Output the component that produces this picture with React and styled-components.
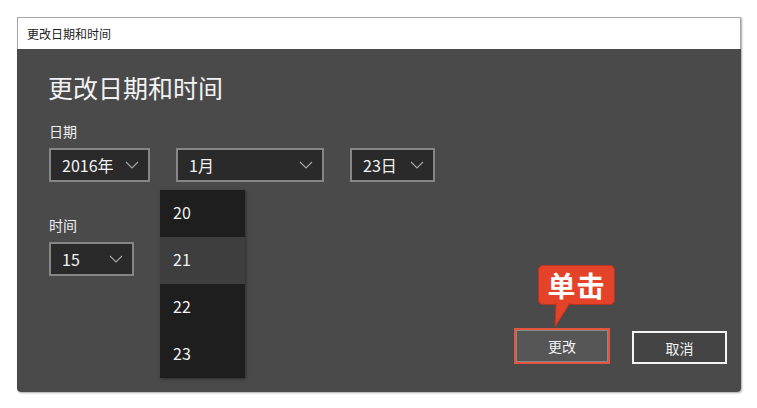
import React from "react";
import styled, { createGlobalStyle } from "styled-components";

const Global = createGlobalStyle`
  html, body { margin: 0; padding: 0; background: #ffffff; }
  body { font-family: "Noto Sans CJK SC", "Noto Sans", sans-serif; }
  * { box-sizing: border-box; }
`;

const Page = styled.div`
  width: 757px;
  height: 408px;
  padding: 17px 0 0 17px;
  background: #fff;
`;

const Window = styled.div`
  width: 724px;
  height: 375px;
  display: flex;
  flex-direction: column;
  border-radius: 0 0 4px 4px;
  box-shadow: 1px 1px 2px rgba(0, 0, 0, 0.35);
  position: relative;
`;

const TitleBar = styled.div`
  height: 32px;
  flex: none;
  display: flex;
  align-items: center;
  padding-left: 9px;
  background: #fff;
  border: 1px solid #a8a8a8;
  border-bottom: none;
  font-size: 12px;
  color: #1c1c1c;
`;

const Body = styled.div`
  flex: 1;
  display: flex;
  flex-direction: column;
  background: #4a4a4a;
  padding: 20px 14px 28px 31px;
  border-radius: 0 0 4px 4px;
  position: relative;
`;

const Heading = styled.h1`
  margin: 0;
  font-weight: 400;
  font-size: 25px;
  line-height: 36px;
  color: #f2f2f2;
`;

const Label = styled.div`
  font-size: 14px;
  line-height: 20px;
  color: #f0f0f0;
  margin-top: ${(p) => p.$top}px;
  margin-bottom: 7px;
  padding-left: 1px;
`;

const Row = styled.div`
  display: flex;
  gap: 26px;
  padding-left: 1px;
`;

const Select = styled.div`
  width: ${(p) => p.$w}px;
  height: 34px;
  display: flex;
  align-items: center;
  justify-content: space-between;
  padding: 0 9px 0 11px;
  background: #2a2a2a;
  border: 2px solid #868686;
  font-size: 16px;
  color: #f2f2f2;
`;

const Chevron = () => (
  <svg width="14" height="8" viewBox="0 0 14 8">
    <path d="M1 1 L7 7 L13 1" fill="none" stroke="#a8a8a8" strokeWidth="1.1" />
  </svg>
);

const TimeWrap = styled.div`
  padding-left: 1px;
`;

const Dropdown = styled.ul`
  position: absolute;
  left: 143px;
  top: 141px;
  width: 85px;
  margin: 0;
  padding: 0;
  list-style: none;
  background: #1e1e1e;
  box-shadow: 1px 1px 3px rgba(0, 0, 0, 0.4);
`;

const Item = styled.li`
  height: 47px;
  display: flex;
  align-items: center;
  padding: 0 0 4px 13px;
  font-size: 16px;
  color: #f0f0f0;
  background: ${(p) => (p.$active ? "#3e3e3e" : "transparent")};
`;

const Footer = styled.div`
  margin-top: auto;
  display: flex;
  justify-content: flex-end;
  align-items: flex-end;
  gap: 22px;
`;

const Button = styled.button`
  width: ${(p) => p.$w}px;
  height: ${(p) => p.$h}px;
  background: ${(p) => (p.$primary ? "#565656" : "#444")};
  border: 2px solid ${(p) => (p.$primary ? "#e4553f" : "#f4f4f4")};
  box-shadow: ${(p) => (p.$primary ? "inset 0 0 0 1px #8a8a8a" : "none")};
  color: #f2f2f2;
  font-family: inherit;
  font-size: 14px;
  padding: 0;
  position: relative;
`;

const Callout = styled.div`
  position: absolute;
  left: 22px;
  bottom: 57px;
  width: 77px;
  height: 40px;
  background: #e4432a;
  border: 1px solid #b83420;
  border-radius: 5px;
  display: flex;
  align-items: center;
  justify-content: center;
  color: #fff;
  font-size: 28px;
  font-weight: 700;
  letter-spacing: 1px;
`;

const Tail = styled.svg`
  position: absolute;
  left: 14px;
  top: 37px;
`;

export default function App() {
  return (
    <>
      <Global />
      <Page>
        <Window>
          <TitleBar>更改日期和时间</TitleBar>
          <Body>
            <Heading>更改日期和时间</Heading>
            <Label $top={16}>日期</Label>
            <Row>
              <Select $w={101}>
                <span>2016年</span>
                <Chevron />
              </Select>
              <Select $w={148}>
                <span>1月</span>
                <Chevron />
              </Select>
              <Select $w={85}>
                <span>23日</span>
                <Chevron />
              </Select>
            </Row>
            <Label $top={33}>时间</Label>
            <TimeWrap>
              <Select $w={85}>
                <span>15</span>
                <Chevron />
              </Select>
            </TimeWrap>
            <Dropdown>
              <Item>20</Item>
              <Item $active>21</Item>
              <Item>22</Item>
              <Item>23</Item>
            </Dropdown>
            <Footer>
              <Button $primary $w={96} $h={36}>
                更改
                <Callout>
                  单击
                  <Tail width="20" height="26" viewBox="0 0 20 26">
                    <path d="M3 0 L17 0 L2 24 Z" fill="#e4432a" />
                    <path d="M17 0 L2 24 L3 0" fill="none" stroke="#b83420" strokeWidth="1" />
                  </Tail>
                </Callout>
              </Button>
              <Button $w={95} $h={33}>取消</Button>
            </Footer>
          </Body>
        </Window>
      </Page>
    </>
  );
}
